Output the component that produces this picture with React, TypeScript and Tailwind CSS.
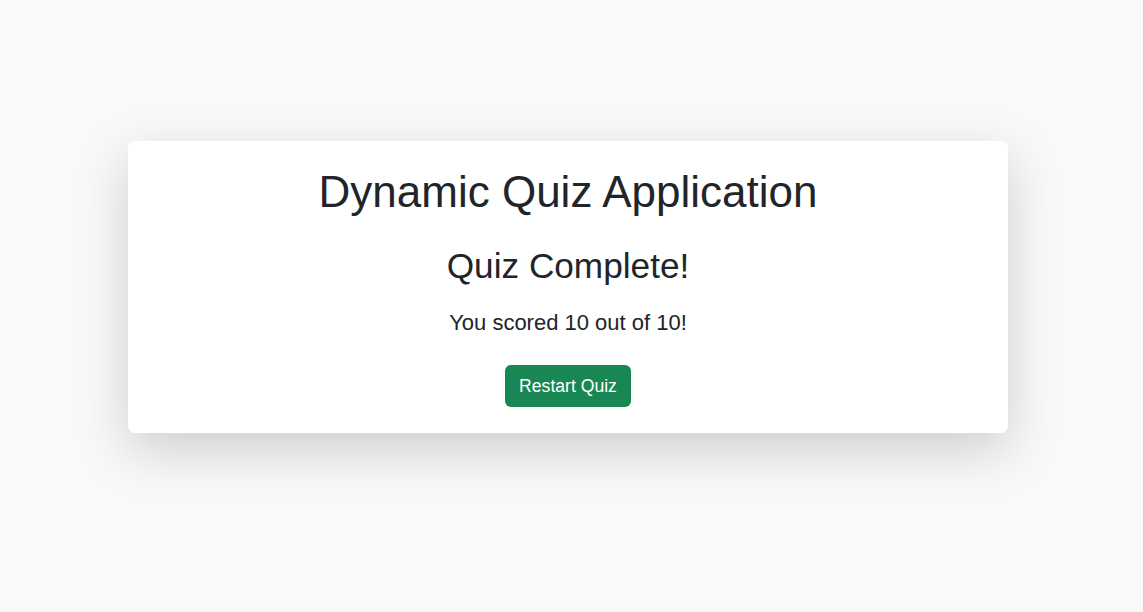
import React from 'react';

const App = () => {
  return (
    <div
      className="min-h-[612px] w-full bg-[#f8f9fa] pt-[141px] text-[#212529]"
      style={{ fontFamily: '"Liberation Sans", Arial, sans-serif' }}
    >
      {/* Result card */}
      <div className="ml-[128px] flex w-[880px] flex-col items-center rounded-[7px] bg-white pt-[25px] pb-[26px] shadow-[0_17px_53px_rgba(0,0,0,0.175)]">
        <h1 className="text-[44px] font-normal leading-[52.8px]">Dynamic Quiz Application</h1>
        <h2 className="mt-[26px] text-[35.2px] font-normal leading-[42.24px]">Quiz Complete!</h2>
        <p className="mt-[19px] text-[22px] font-light leading-[33px]">You scored 10 out of 10!</p>
        <button className="mt-[26px] flex h-[42px] w-[126px] items-center justify-center rounded-[6px] bg-[#198754] text-[17.6px] leading-[26px] text-white">
          Restart Quiz
        </button>
      </div>
    </div>
  );
};

export default App;
